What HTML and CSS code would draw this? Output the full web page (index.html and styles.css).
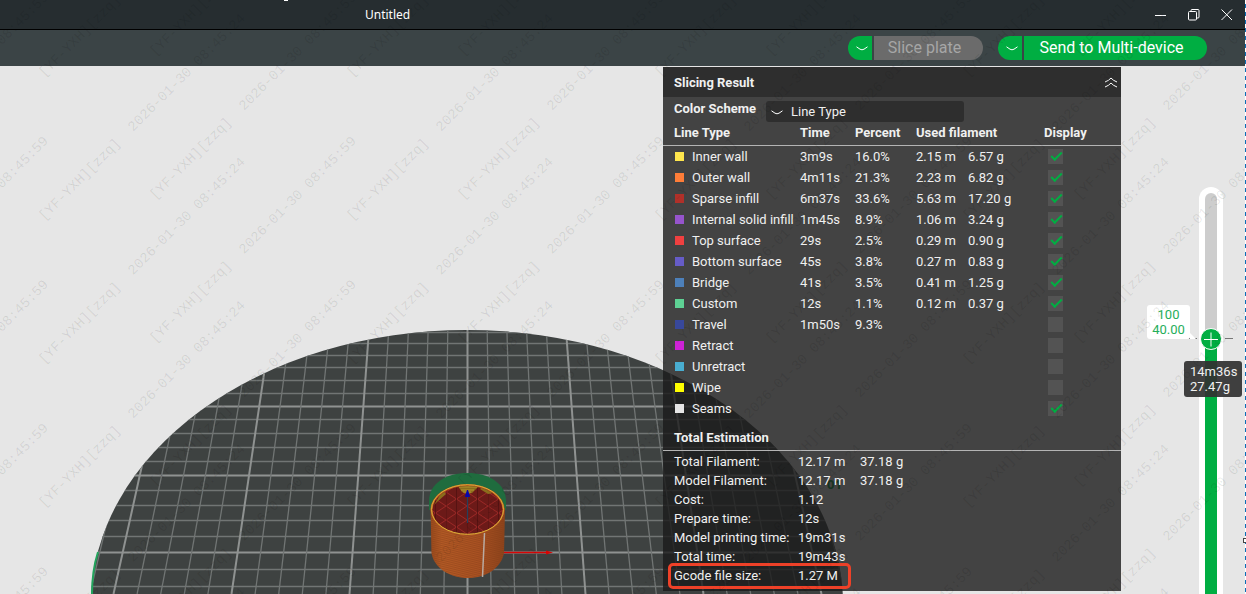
FILE: index.html
```html
<!DOCTYPE html>
<html lang="en">
<head>
<meta charset="utf-8">
<title>Untitled</title>
<link rel="stylesheet" href="styles.css">
</head>
<body>
<div class="app">
  <header class="titlebar">
    <h1 class="doc-name">Untitled</h1>
    <div class="window-controls">
      <button class="win-btn" aria-label="Minimize"><svg width="12" height="12" viewBox="0 0 12 12"><path d="M0 6.5H11"/></svg></button>
      <button class="win-btn" aria-label="Restore"><svg width="12" height="12" viewBox="0 0 12 12"><rect x=".5" y="2.500" width="8" height="8.500" rx="1"/><path d="M3 2.500V1.500Q3 .5 4 .5H10Q11 .5 11 1.500V8Q11 9 10 9H8.500"/></svg></button>
      <button class="win-btn" aria-label="Close"><svg width="12" height="12" viewBox="0 0 12 12"><path d="M.5 .5L11 11M11 .5L.5 11"/></svg></button>
    </div>
  </header>
  <nav class="toolbar">
    <div class="split split-slice">
      <button class="split-arrow" aria-label="Slice options"><svg width="12" height="5" viewBox="0 0 12 5"><path d="M.5 .8L4 3.200Q6 4.400 8 3.200L11.500 .8"/></svg></button>
      <button class="split-main" disabled>Slice plate</button>
    </div>
    <div class="split split-send">
      <button class="split-arrow" aria-label="Send options"><svg width="12" height="5" viewBox="0 0 12 5"><path d="M.5 .8L4 3.200Q6 4.400 8 3.200L11.500 .8"/></svg></button>
      <button class="split-main">Send to Multi-device</button>
    </div>
  </nav>
  <main class="scene">
    <svg class="bed" viewBox="0 66 1246 528" preserveAspectRatio="xMidYMin slice" aria-hidden="true">
      <defs>
        <clipPath id="bedClip"><ellipse cx="467" cy="604" rx="376" ry="274"/></clipPath>
        <clipPath id="topClip"><ellipse cx="467.500" cy="510" rx="35" ry="24"/></clipPath>
        <linearGradient id="wall"><stop offset="0" stop-color="#99491c"/><stop offset=".15" stop-color="#b35a25"/><stop offset=".65" stop-color="#a95122"/><stop offset="1" stop-color="#8d431b"/></linearGradient>
        <pattern id="layers" width="4" height="2" patternUnits="userSpaceOnUse" patternTransform="rotate(14)"><path d="M0 .5H4" stroke="#7e3a17" stroke-width=".6" opacity=".6"/></pattern>
        <pattern id="infill" x="467" y="506" width="21" height="14" patternUnits="userSpaceOnUse"><rect width="21" height="14" fill="#6c1a18"/><path d="M0 0L21 14M21 0L0 14" stroke="#9c2826" stroke-width="1"/><path d="M0 0V14M10.500 0V14" stroke="#501110" stroke-width=".8"/></pattern>
      </defs>
      <ellipse cx="467" cy="604" rx="376" ry="274" fill="#3e4241"/>
      <g id="grid" clip-path="url(#bedClip)"></g>
      <path d="M98 552Q92 571 92 594" fill="none" stroke="#22a35c" stroke-width="2"/>
      <text class="plate-no" x="827" y="489">01</text>
      <path d="M429 501C429 483 447 473 467.500 473S506 483 506 501V510H429Z" fill="#1f6c3e"/>
      <path d="M504 552.500H548" stroke="#d80505" stroke-width="1.500"/><path d="M546 550.500L553 552.500L546 554.500Z" fill="#d80505"/>
      <path d="M430.500 508L431.500 553C434 568 450 578 468 578S501 568 504 553L505 508Z" fill="url(#wall)"/>
      <path d="M430.500 508L431.500 553C434 568 450 578 468 578S501 568 504 553L505 508Z" fill="url(#layers)"/>
      <ellipse cx="467.500" cy="509.500" rx="37" ry="25.500" fill="#b9571e"/>
      <ellipse cx="467.500" cy="510" rx="35" ry="24" fill="url(#infill)"/>
      <g clip-path="url(#topClip)" fill="#8b6d1c"><path d="M434 505L443 490L446 494L437 502ZM457 485H480L472 493L467 494L462 492ZM483 486L493 493L488 494L480 489Z"/><path d="M459 487H477M461 490H474M463 492H471" stroke="#c7a633" stroke-width=".7"/></g>
      <ellipse cx="467.500" cy="509.500" rx="36" ry="24.800" fill="none" stroke="#d9b13a" stroke-width="1"/>
      <path d="M467.500 496V523" stroke="#27405c" stroke-width="1.200"/><path d="M467.500 490L465.500 496.500H469.500Z" fill="#0606b0" stroke="#0606b0"/>
      <path d="M484.500 533L482.500 577" stroke="#b9aaa1" stroke-width="1.500"/>
    </svg>

    <section class="panel">
      <header class="panel-head">
        <h2>Slicing Result</h2>
        <button class="collapse" aria-label="Collapse"><svg width="14" height="11" viewBox="0 0 14 11"><path d="M1 5Q5 3.500 7 1Q9 3.500 13 5M1 10Q5 8.500 7 6Q9 8.500 13 10"/></svg></button>
      </header>
      <div class="scheme">
        <label for="scheme">Color Scheme</label>
        <div class="scheme-box">
          <select id="scheme"><option>Line Type</option></select>
          <svg class="scheme-arrow" width="12" height="5" viewBox="0 0 12 5"><path d="M.5 .8L4 3.200Q6 4.400 8 3.200L11.500 .8"/></svg>
        </div>
      </div>
      <table class="lines">
        <colgroup><col class="c-name"><col class="c-time"><col class="c-pct"><col class="c-m"><col class="c-g"><col class="c-show"></colgroup>
        <thead><tr><th>Line Type</th><th>Time</th><th>Percent</th><th colspan="2">Used filament</th><th>Display</th></tr></thead>
        <tbody>
          <tr><td><i class="sw inner"></i>Inner wall</td><td>3m9s</td><td>16.0%</td><td>2.15 m</td><td>6.57 g</td><td><input type="checkbox" aria-label="Inner wall" checked></td></tr>
          <tr><td><i class="sw outer"></i>Outer wall</td><td>4m11s</td><td>21.3%</td><td>2.23 m</td><td>6.82 g</td><td><input type="checkbox" aria-label="Outer wall" checked></td></tr>
          <tr><td><i class="sw sparse"></i>Sparse infill</td><td>6m37s</td><td>33.6%</td><td>5.63 m</td><td>17.20 g</td><td><input type="checkbox" aria-label="Sparse infill" checked></td></tr>
          <tr><td><i class="sw solid"></i>Internal solid infill</td><td>1m45s</td><td>8.9%</td><td>1.06 m</td><td>3.24 g</td><td><input type="checkbox" aria-label="Internal solid infill" checked></td></tr>
          <tr><td><i class="sw top"></i>Top surface</td><td>29s</td><td>2.5%</td><td>0.29 m</td><td>0.90 g</td><td><input type="checkbox" aria-label="Top surface" checked></td></tr>
          <tr><td><i class="sw bottom"></i>Bottom surface</td><td>45s</td><td>3.8%</td><td>0.27 m</td><td>0.83 g</td><td><input type="checkbox" aria-label="Bottom surface" checked></td></tr>
          <tr><td><i class="sw bridge"></i>Bridge</td><td>41s</td><td>3.5%</td><td>0.41 m</td><td>1.25 g</td><td><input type="checkbox" aria-label="Bridge" checked></td></tr>
          <tr><td><i class="sw custom"></i>Custom</td><td>12s</td><td>1.1%</td><td>0.12 m</td><td>0.37 g</td><td><input type="checkbox" aria-label="Custom" checked></td></tr>
          <tr><td><i class="sw travel"></i>Travel</td><td>1m50s</td><td>9.3%</td><td></td><td></td><td><input type="checkbox" aria-label="Travel"></td></tr>
          <tr><td><i class="sw retract"></i>Retract</td><td></td><td></td><td></td><td></td><td><input type="checkbox" aria-label="Retract"></td></tr>
          <tr><td><i class="sw unretract"></i>Unretract</td><td></td><td></td><td></td><td></td><td><input type="checkbox" aria-label="Unretract"></td></tr>
          <tr><td><i class="sw wipe"></i>Wipe</td><td></td><td></td><td></td><td></td><td><input type="checkbox" aria-label="Wipe"></td></tr>
          <tr><td><i class="sw seams"></i>Seams</td><td></td><td></td><td></td><td></td><td><input type="checkbox" aria-label="Seams" checked></td></tr>
        </tbody>
      </table>
      <h3 class="total-head">Total Estimation</h3>
      <dl class="totals">
        <div><dt>Total Filament:</dt><dd>12.17 m</dd><dd>37.18 g</dd></div>
        <div><dt>Model Filament:</dt><dd>12.17 m</dd><dd>37.18 g</dd></div>
        <div><dt>Cost:</dt><dd>1.12</dd></div>
        <div><dt>Prepare time:</dt><dd>12s</dd></div>
        <div><dt>Model printing time:</dt><dd>19m31s</dd></div>
        <div><dt>Total time:</dt><dd>19m43s</dd></div>
        <div class="marked"><dt>Gcode file size:</dt><dd>1.27 M</dd></div>
      </dl>
    </section>

    <aside class="layers">
      <input class="layer-range" type="range" min="0" max="1000" value="644" aria-label="Layer">
      <svg class="knob-plus" width="46" height="16" viewBox="0 0 46 16"><path d="M17 8.500H31M24 1.500V15.500" stroke="#fff"/><path d="M2 7.500H10M38 7.500H46" stroke="#777"/></svg>
      <output class="layer-label">100<br>40.00</output>
      <div class="layer-tip">14m36s<br>27.47g</div>
    </aside>
  </main>
  <div class="edge"></div>
  <span class="edge-handle"></span>
  <span class="top-handle"></span>
  <svg class="watermark" aria-hidden="true"><g id="marks"></g></svg>
</div>
<script src="script.js"></script>
</body>
</html>
```
FILE: styles.css
```css
*, *::before, *::after { box-sizing: border-box; }
body { margin: 0; font-family: Roboto, "Noto Sans", sans-serif; font-size: 13px; color: #f0f0f0; }
button { border: 0; padding: 0; background: none; color: inherit; font: inherit; }
h1, h2, h3, dl, dd { margin: 0; }
svg { fill: none; }
.app { position: relative; display: flex; flex-direction: column; height: 100vh; overflow: hidden; background: #e6e6e6; }

.titlebar { display: flex; align-items: center; justify-content: space-between; height: 30px; padding: 0 13px 0 365px; background: #262d30; border-bottom: 1px solid #000; flex: none; }
.doc-name { font-family: "Noto Sans", sans-serif; font-size: 12px; font-weight: 400; color: #fff; }
.window-controls { display: flex; gap: 21px; }
.win-btn { display: flex; stroke: #fff; }

.toolbar { display: flex; align-items: center; justify-content: flex-end; gap: 15px; height: 36px; padding-right: 39px; background: #3b4446; flex: none; }
.split { display: flex; gap: 2px; height: 24px; font-size: 16px; }
.split-arrow { display: flex; align-items: center; justify-content: center; width: 24px; padding-left: 3px; border-radius: 12px 0 0 12px; background: #00ae42; stroke: #fff; }
.split-main { border-radius: 0 12px 12px 0; background: #00ae42; color: #fff; line-height: 24px; }
.split-slice .split-main { width: 109px; padding-right: 8px; background: #6b6b6b; color: #a6a6a6; }
.split-send .split-main { width: 183px; padding-right: 8px; }

.scene { position: relative; flex: 1; min-height: 0; }
.bed { position: absolute; inset: 0; width: 100%; height: 100%; }
.plate-no { fill: #0b9a40; font: bold 13px "Noto Sans", sans-serif; }
.minor { stroke: #717574; stroke-width: 1.3; }
.major { stroke: #8f9291; stroke-width: 2; }

.panel { position: absolute; top: 1px; right: 125px; width: 458px; padding-bottom: 6px; background: rgba(26, 26, 26, .8); }
.panel-head { display: flex; align-items: center; justify-content: space-between; height: 30px; padding: 0 3px 0 11px; background: #2e2e2e; }
.panel-head h2, .total-head { font-size: 13px; font-weight: 700; }
.collapse { display: flex; stroke: #fff; }
.scheme { display: flex; gap: 8px; height: 25px; padding: 4px 0 0 11px; }
.scheme label { width: 84px; line-height: 16px; font-weight: 700; white-space: nowrap; }
.scheme-box { position: relative; width: 198px; height: 21px; }
.scheme select { width: 100%; height: 100%; padding: 0 0 0 25px; border: 0; border-radius: 3px; background: #2e2e2e; color: inherit; font: inherit; appearance: none; }
.scheme-arrow { position: absolute; left: 5px; top: 9px; stroke: #fff; pointer-events: none; }

.lines { width: 100%; table-layout: fixed; border-collapse: collapse; white-space: nowrap; }
.c-name { width: 137px; }
.c-time { width: 55px; }
.c-pct { width: 61px; }
.c-m { width: 52px; }
.c-g { width: 76px; }
.lines th { height: 23px; padding: 0; text-align: left; font-weight: 700; line-height: 20px; border-bottom: 1px solid #b4b4b4; }
.lines td { height: 21px; padding: 0; line-height: 21px; }
.lines th:first-child, .lines td:first-child { padding-left: 11px; }
.sw { display: inline-block; width: 9px; height: 9px; margin: 0 8px 0 1px; }
.inner { background: #ffe64d; } .outer { background: #ff7d38; } .sparse { background: #b03029; }
.solid { background: #9654cc; } .top { background: #f04040; } .bottom { background: #665cc7; }
.bridge { background: #4d80ba; } .custom { background: #5ed194; } .travel { background: #38489b; }
.retract { background: #cd22d6; } .unretract { background: #49add0; } .wipe { background: #ffff00; } .seams { background: #e6e6e6; }
.lines input { display: block; width: 15px; height: 15px; margin: 0 0 0 4px; overflow: hidden; appearance: none; background: #535353; }
.lines input:checked::after { content: ""; display: block; width: 11px; height: 6px; margin: 3px 0 0 3px; border: solid #00ae42; border-width: 0 0 2px 2px; transform: rotate(-45deg); }

.total-head { margin-top: 7px; padding-left: 11px; line-height: 24px; border-bottom: 1px solid #b4b4b4; }
.totals { padding-top: 1px; }
.totals div { position: relative; display: grid; grid-template-columns: 124px 62px 1fr; padding-left: 11px; line-height: 19px; white-space: nowrap; }
.totals .marked::after { content: ""; position: absolute; left: 5px; top: -3px; width: 183px; height: 26px; border: 3px solid #ee4128; border-radius: 5px; }

.layers { position: absolute; top: 121px; right: 23px; bottom: 0; width: 24px; padding: 6px 6px 0; border-radius: 12px 12px 0 0; background: #fff; }
.layer-range { display: block; width: 12px; height: 100%; margin: 0; appearance: none; writing-mode: vertical-lr; direction: rtl; border-radius: 6px 6px 0 0; background: linear-gradient(#cdcdcd 36%, #00ae42 36%); }
.layer-range::-webkit-slider-thumb { appearance: none; width: 22px; height: 22px; border: 1px solid #fff; border-radius: 50%; background: #00ae42; }
.knob-plus { position: absolute; left: -12px; top: 144px; pointer-events: none; }
.layer-label { position: absolute; right: 33px; top: 118px; width: 43px; padding: 2px 0; border-radius: 3px; background: #fff; color: #26ae5b; line-height: 15px; text-align: center; }
.layer-label::after { content: ""; position: absolute; left: 100%; bottom: 0; border: solid transparent; border-width: 6px 0 0 6px; border-bottom: 0; border-left: 6px solid #fff; }
.layer-tip { position: absolute; right: -19px; top: 174px; width: 58px; padding: 3px 0 3px 6px; border-radius: 3px; background: rgba(50, 50, 50, .93); line-height: 15px; }

.edge { position: absolute; top: 0; right: 0; bottom: 0; width: 1px; background: repeating-linear-gradient(#fff 0 4px, #0a70b8 4px 8px); }
.edge-handle { position: absolute; right: -2px; top: 538px; width: 5px; height: 5px; border: 1px solid #444; background: #fff; }
.top-handle { position: absolute; left: 284px; top: 0; width: 4px; height: 1px; background: #fff; }
.watermark { position: absolute; inset: 0; width: 100%; height: 100%; pointer-events: none; }
.watermark text { font: 14px "Liberation Mono", monospace; fill: #000; fill-opacity: .09; white-space: pre; }
```
FILE: script.js
```js
const NS = "http://www.w3.org/2000/svg";
function add(parent, tag, attrs, text) {
  const el = document.createElementNS(NS, tag);
  for (const k in attrs) el.setAttribute(k, attrs[k]);
  if (text) el.textContent = text;
  parent.appendChild(el);
}

// Build plate grid: every fifth line is a major one.
const grid = document.getElementById("grid");
const rows = [332, 343, 355, 367, 380, 393, 406, 419, 433, 447, 461, 475, 490, 505, 520, 536, 552, 569, 586];
rows.forEach((y, i) => add(grid, "path", { d: `M80 ${y + 0.5}H860`, class: (i - 1) % 5 === 0 && i > 1 ? "major" : "minor" }));
for (let k = -19; k <= 19; k++) {
  add(grid, "path", { d: `M${467.5 + k * 19.55} 320L${467.5 + k * 23.6} 594`, class: k % 5 === 0 ? "major" : "minor" });
}

// Diagonal security marks, tiled over the whole window.
const marks = document.getElementById("marks");
const SPAN = 204;
for (let c = -1; c * 308 < innerWidth; c++) {
  for (let r = -1; r * 143.5 < innerHeight + SPAN; r++) {
    [[44, 221, "24"], [155, 200, "59"]].forEach(([x0, y0, s]) => {
      const x = x0 + c * 308, y = y0 + r * 143.5;
      if (x + SPAN < 0 || x > innerWidth || y < 0 || y - SPAN > innerHeight) return;
      add(marks, "text", { transform: `translate(${x} ${y}) rotate(-45)` }, `[YF-YXH][zzq]  2026-01-30 08:45:${s}`);
    });
  }
}
```
